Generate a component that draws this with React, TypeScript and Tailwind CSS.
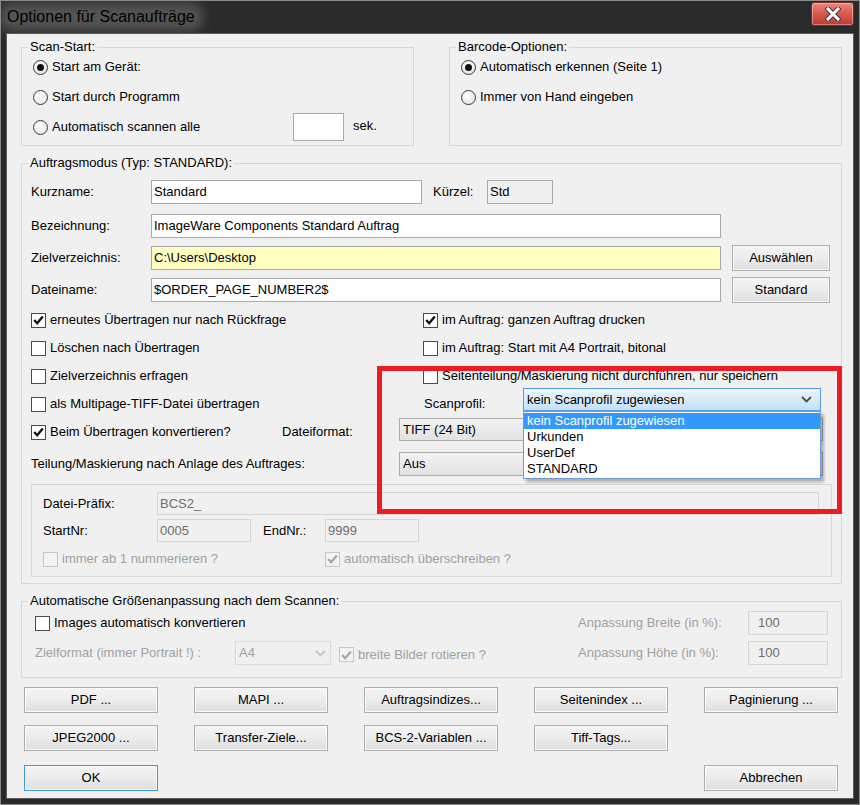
import React from "react";

const Radio = ({ checked = false }: { checked?: boolean }) => (
  <span className="w-[15px] h-[15px] rounded-full border border-[#3a3a3a] bg-[radial-gradient(circle_at_40%_35%,#ffffff,#dedede)] flex items-center justify-center shrink-0">
    {checked && <span className="w-[7px] h-[7px] rounded-full bg-[#111111]" />}
  </span>
);

const Check = ({ checked = false, disabled = false }: { checked?: boolean; disabled?: boolean }) => (
  <span
    className={
      disabled
        ? "w-[15px] h-[15px] border border-[#c6c6c6] bg-[#f3f3f3] flex items-center justify-center shrink-0"
        : "w-[15px] h-[15px] border border-[#4a4a4a] bg-white flex items-center justify-center shrink-0"
    }
  >
    {checked && (
      <svg width="11" height="10" viewBox="0 0 11 10">
        <path d="M1.2 5 L4.2 8.2 L9.8 1.5" fill="none" stroke={disabled ? "#a9a9a9" : "#151515"} strokeWidth="2.4" />
      </svg>
    )}
  </span>
);

const Group = ({ label, className, children }: { label: string; className: string; children?: React.ReactNode }) => (
  <div className={"relative border border-[#d7d7d7] shrink-0 " + className}>
    <span className="absolute left-[6px] -top-[9px] px-[2px] bg-[#f0f0f0] leading-[15px] whitespace-nowrap">{label}</span>
    {children}
  </div>
);

const Btn = ({ children, className = "" }: { children: React.ReactNode; className?: string }) => (
  <div
    className={
      "h-[26px] border border-[#adadad] bg-gradient-to-b from-[#f4f4f4] via-[#ececec] to-[#dedede] shadow-[inset_0_0_0_1px_#fafafa] flex items-center justify-center shrink-0 whitespace-nowrap " +
      className
    }
  >
    {children}
  </div>
);

const Chevron = ({ color }: { color: string }) => (
  <svg width="11" height="7" viewBox="0 0 11 7">
    <path d="M1 1 L5.5 5.5 L10 1" fill="none" stroke={color} strokeWidth="1.8" />
  </svg>
);

const Row = ({ children, className = "" }: { children: React.ReactNode; className?: string }) => (
  <div className={"flex items-center shrink-0 " + className}>{children}</div>
);

export default function App() {
  return (
    <div className="w-[860px] h-[805px] bg-[#2a2a2a] border border-[#8a8a8a] flex flex-col overflow-hidden font-['Liberation_Sans',Arial,sans-serif] text-[13px] text-black">
      {/* Title bar */}
      <div className="h-[32px] flex items-start shrink-0">
        <div className="relative ml-[6px] mt-[6px] text-[16px] leading-[20px]">
          <span className="absolute -left-[8px] -right-[8px] -top-[4px] -bottom-[4px] rounded-[12px] bg-white/20 blur-[6px]" />
          <span className="relative">Optionen für Scanaufträge</span>
        </div>
        <div className="ml-auto mr-[5px] mt-[1px] w-[43px] h-[24px] rounded-[3px] border border-[#7a2a24] bg-gradient-to-b from-[#e9867c] via-[#d8584c] to-[#c13a2e] shadow-[inset_0_0_0_1px_rgba(255,255,255,0.35)] flex items-center justify-center">
          <svg width="16" height="14" viewBox="0 0 16 14">
            <path d="M3 2 L13 12 M13 2 L3 12" stroke="#3a3a3a" strokeWidth="5" strokeLinecap="square" />
            <path d="M3 2 L13 12 M13 2 L3 12" stroke="#ffffff" strokeWidth="3" strokeLinecap="square" />
          </svg>
        </div>
      </div>

      {/* Client area */}
      <div className="relative flex-1 mx-[5px] mb-[5px] border border-[#5c5c5c] bg-[#f0f0f0] flex flex-col pl-[14px]">
        {/* Top groups */}
        <div className="flex mt-[13px] gap-[35px]">
          <Group label="Scan-Start:" className="w-[393px] h-[99px] pt-[4px] pl-[11px]">
            <Row className="h-[30px] gap-[4px]">
              <Radio checked />
              <span>Start am Gerät:</span>
            </Row>
            <Row className="h-[30px] gap-[4px]">
              <Radio />
              <span>Start durch Programm</span>
            </Row>
            <Row className="h-[30px]">
              <div className="w-[260px] flex items-center gap-[4px]">
                <Radio />
                <span>Automatisch scannen alle</span>
              </div>
              <div className="w-[51px] h-[28px] border border-[#a9a9a9] bg-white" />
              <span className="ml-[9px] -mt-[3px]">sek.</span>
            </Row>
          </Group>
          <Group label="Barcode-Optionen:" className="w-[393px] h-[99px] pt-[4px] pl-[11px]">
            <Row className="h-[30px] gap-[4px]">
              <Radio checked />
              <span>Automatisch erkennen (Seite 1)</span>
            </Row>
            <Row className="h-[30px] gap-[4px]">
              <Radio />
              <span>Immer von Hand eingeben</span>
            </Row>
          </Group>
        </div>

        {/* Auftragsmodus */}
        <Group label="Auftragsmodus (Typ: STANDARD):" className="w-[821px] h-[421px] mt-[17px] pt-[16px] pl-[9px] flex flex-col">
          <Row className="h-[24px]">
            <span className="w-[120px]">Kurzname:</span>
            <div className="w-[271px] h-[24px] border border-[#a9a9a9] bg-white px-[2px] flex items-center">Standard</div>
            <span className="ml-[11px] w-[54px]">Kürzel:</span>
            <div className="w-[66px] h-[24px] border border-[#a9a9a9] bg-[#f0f0f0] px-[2px] flex items-center">Std</div>
          </Row>
          <Row className="h-[24px] mt-[10px]">
            <span className="w-[120px]">Bezeichnung:</span>
            <div className="w-[570px] h-[24px] border border-[#a9a9a9] bg-white px-[2px] flex items-center">ImageWare Components Standard Auftrag</div>
          </Row>
          <Row className="h-[24px] mt-[8px]">
            <span className="w-[120px]">Zielverzeichnis:</span>
            <div className="w-[570px] h-[24px] border border-[#a9a9a9] bg-[#ffffc0] px-[2px] flex items-center">C:\Users\Desktop</div>
            <Btn className="ml-[11px] w-[98px]">Auswählen</Btn>
          </Row>
          <Row className="h-[24px] mt-[8px]">
            <span className="w-[120px]">Dateiname:</span>
            <div className="w-[570px] h-[24px] border border-[#a9a9a9] bg-white px-[2px] flex items-center">$ORDER_PAGE_NUMBER2$</div>
            <Btn className="ml-[11px] w-[98px]">Standard</Btn>
          </Row>

          <div className="mt-[4px] flex flex-col">
            <Row className="h-[28px]">
              <div className="w-[392px] flex items-center gap-[4px]">
                <Check checked />
                <span>erneutes Übertragen nur nach Rückfrage</span>
              </div>
              <div className="flex items-center gap-[4px]">
                <Check checked />
                <span>im Auftrag: ganzen Auftrag drucken</span>
              </div>
            </Row>
            <Row className="h-[28px]">
              <div className="w-[392px] flex items-center gap-[4px]">
                <Check />
                <span>Löschen nach Übertragen</span>
              </div>
              <div className="flex items-center gap-[4px]">
                <Check />
                <span>im Auftrag: Start mit A4 Portrait, bitonal</span>
              </div>
            </Row>
            <Row className="h-[28px]">
              <div className="w-[392px] flex items-center gap-[4px]">
                <Check />
                <span>Zielverzeichnis erfragen</span>
              </div>
              <div className="flex items-center gap-[4px]">
                <Check />
                <span>Seitenteilung/Maskierung nicht durchführen, nur speichern</span>
              </div>
            </Row>
            <Row className="h-[28px] relative z-10">
              <div className="w-[392px] flex items-center gap-[4px]">
                <Check />
                <span>als Multipage-TIFF-Datei übertragen</span>
              </div>
              <span className="w-[100px] pl-[1px]">Scanprofil:</span>
              <div className="relative self-start -mt-[2px] w-[298px] h-[23px]">
                <div className="w-full h-full border border-[#569de5] bg-gradient-to-b from-[#ecf5fd] to-[#c4e0f9] flex items-center pl-[3px] pr-[8px]">
                  <span className="flex-1">kein Scanprofil zugewiesen</span>
                  <Chevron color="#4d4d4d" />
                </div>
                <div className="absolute left-0 top-[23px] w-[298px] border border-[#6b9ad6] bg-white shadow-[3px_3px_3px_rgba(0,0,0,0.28)] flex flex-col py-[1px] leading-[16px]">
                  <div className="h-[16px] bg-[#3399ff] text-white pl-[3px]">kein Scanprofil zugewiesen</div>
                  <div className="h-[16px] pl-[3px]">Urkunden</div>
                  <div className="h-[16px] pl-[3px]">UserDef</div>
                  <div className="h-[16px] pl-[3px]">STANDARD</div>
                </div>
              </div>
            </Row>
            <Row className="h-[28px]">
              <div className="w-[251px] flex items-center gap-[4px]">
                <Check checked />
                <span>Beim Übertragen konvertieren?</span>
              </div>
              <span className="w-[117px]">Dateiformat:</span>
              <div className="self-start w-[424px] h-[23px] border border-[#adadad] bg-gradient-to-b from-[#f2f2f2] to-[#e2e2e2] flex items-center pl-[3px]">TIFF (24 Bit)</div>
            </Row>
            <Row className="h-[24px] mt-[6px]">
              <span className="w-[368px]">Teilung/Maskierung nach Anlage des Auftrages:</span>
              <div className="w-[424px] h-[24px] border border-[#adadad] bg-gradient-to-b from-[#f2f2f2] to-[#e2e2e2] flex items-center pl-[3px]">Aus</div>
            </Row>
          </div>

          {/* inner group */}
          <div className="mt-[8px] w-[801px] h-[93px] border border-[#d7d7d7] pt-[7px] pl-[11px] flex flex-col shrink-0">
            <Row className="h-[23px]">
              <span className="w-[114px]">Datei-Präfix:</span>
              <div className="w-[662px] h-[23px] border border-[#d5d5d5] bg-[#f0f0f0] px-[2px] flex items-center text-[#6d6d6d]">BCS2_</div>
            </Row>
            <Row className="h-[23px] mt-[4px]">
              <span className="w-[114px]">StartNr:</span>
              <div className="w-[94px] h-[23px] border border-[#d5d5d5] bg-[#f0f0f0] px-[2px] flex items-center text-[#6d6d6d]">0005</div>
              <span className="ml-[12px] w-[62px]">EndNr.:</span>
              <div className="w-[94px] h-[23px] border border-[#d5d5d5] bg-[#f0f0f0] px-[2px] flex items-center text-[#6d6d6d]">9999</div>
            </Row>
            <Row className="h-[24px] mt-[5px] text-[#a0a0a0]">
              <div className="w-[282px] flex items-center gap-[4px]">
                <Check disabled />
                <span>immer ab 1 nummerieren ?</span>
              </div>
              <div className="flex items-center gap-[4px]">
                <Check checked disabled />
                <span>automatisch überschreiben ?</span>
              </div>
            </Row>
          </div>
        </Group>

        {/* Größenanpassung */}
        <Group label="Automatische Größenanpassung nach dem Scannen:" className="w-[821px] h-[77px] mt-[17px] pt-[9px] pl-[13px] pr-[13px] flex flex-col">
          <Row className="h-[24px]">
            <div className="flex-1 flex items-center gap-[4px]">
              <Check />
              <span>Images automatisch konvertieren</span>
            </div>
            <span className="w-[170px] text-[#a0a0a0]">Anpassung Breite (in %):</span>
            <div className="w-[80px] h-[24px] border border-[#d5d5d5] bg-[#f0f0f0] px-[9px] flex items-center text-[#6d6d6d]">100</div>
          </Row>
          <Row className="h-[24px] mt-[6px]">
            <div className="flex-1 flex items-center">
              <span className="w-[200px] text-[#a0a0a0]">Zielformat (immer Portrait !) :</span>
              <div className="w-[96px] h-[24px] border border-[#d9d9d9] bg-[#f0f0f0] flex items-center pl-[3px] pr-[4px] text-[#a0a0a0]">
                <span className="flex-1">A4</span>
                <Chevron color="#c4c4c4" />
              </div>
              <div className="ml-[8px] mt-[3px] flex items-center gap-[4px]">
                <Check checked disabled />
                <span className="text-[#a0a0a0]">breite Bilder rotieren ?</span>
              </div>
            </div>
            <span className="w-[170px] text-[#a0a0a0]">Anpassung Höhe (in %):</span>
            <div className="w-[80px] h-[24px] border border-[#d5d5d5] bg-[#f0f0f0] px-[9px] flex items-center text-[#6d6d6d]">100</div>
          </Row>
        </Group>

        {/* Buttons */}
        <div className="ml-[3px] mt-[9px] flex gap-[36px]">
          <Btn className="w-[134px]">PDF ...</Btn>
          <Btn className="w-[134px]">MAPI ...</Btn>
          <Btn className="w-[134px]">Auftragsindizes...</Btn>
          <Btn className="w-[134px]">Seitenindex ...</Btn>
          <Btn className="w-[134px]">Paginierung ...</Btn>
        </div>
        <div className="ml-[3px] mt-[12px] flex gap-[36px]">
          <Btn className="w-[134px]">JPEG2000 ...</Btn>
          <Btn className="w-[134px]">Transfer-Ziele...</Btn>
          <Btn className="w-[134px]">BCS-2-Variablen ...</Btn>
          <Btn className="w-[134px]">Tiff-Tags...</Btn>
        </div>
        <div className="ml-[3px] mt-[14px] flex">
          <Btn className="w-[134px] !border-[#3d95e8]">OK</Btn>
          <Btn className="w-[134px] ml-auto mr-[15px]">Abbrechen</Btn>
        </div>

        {/* Red annotation rectangle */}
        <div className="absolute left-[370px] top-[332px] w-[465px] h-[148px] border-[5px] border-[#ed1c24] pointer-events-none" />
      </div>
    </div>
  );
}
